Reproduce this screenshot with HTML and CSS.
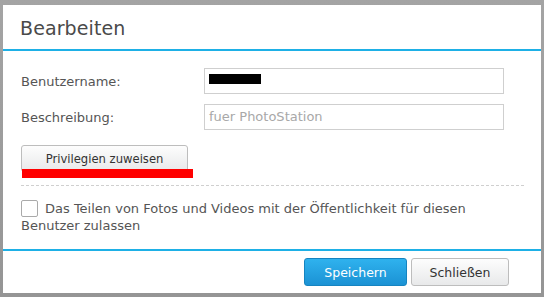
FILE: index.html
```html
<!DOCTYPE html>
<html lang="de">
<head>
<meta charset="utf-8">
<link rel="stylesheet" href="styles.css">
</head>
<body>
<div class="dialog">
  <div class="header">Bearbeiten</div>
  <div class="content">
    <div class="row">
      <label class="label">Benutzername:</label>
      <div class="input"><span class="redact"></span></div>
    </div>
    <div class="row">
      <label class="label">Beschreibung:</label>
      <div class="input placeholder">fuer PhotoStation</div>
    </div>
    <div class="priv">
      <button class="btn">Privilegien zuweisen</button>
      <span class="mark"></span>
    </div>
    <div class="sep"></div>
    <div class="check">
      <span class="box"></span>Das Teilen von Fotos und Videos mit der Öffentlichkeit für diesen Benutzer zulassen
    </div>
  </div>
  <div class="footer">
    <button class="btn primary">Speichern</button>
    <button class="btn close">Schließen</button>
  </div>
</div>
</body>
</html>
```
FILE: styles.css
```css
html, body {
  margin: 0;
  padding: 0;
}
body {
  width: 544px;
  height: 297px;
  background: linear-gradient(#a4a4a4, #959595);
  padding: 5px 3px 4px 3px;
  box-sizing: border-box;
  font-family: "DejaVu Sans", Verdana, sans-serif;
  overflow: hidden;
}
.dialog {
  background: #fff;
  height: 288px;
  display: flex;
  flex-direction: column;
}
.header {
  box-sizing: border-box;
  border-bottom: 2px solid #1eb0e6;
  height: 46px;
  padding: 12px 0 0 17px;
  font-size: 19px;
  color: #4a4a4a;
  letter-spacing: 0.1px;
}
.content {
  height: 198px;
  padding: 17px 0 0 18px;
  box-sizing: border-box;
  position: relative;
}
.row {
  display: flex;
  align-items: center;
  height: 26px;
  margin-bottom: 10px;
}
.label {
  width: 183px;
  font-size: 13px;
  color: #555;
}
.input {
  width: 300px;
  height: 26px;
  box-sizing: border-box;
  border: 1px solid #cfcfcf;
  font-size: 13px;
  line-height: 24px;
  padding-left: 4px;
}
.placeholder {
  color: #a8a8a8;
}
.redact {
  display: inline-block;
  width: 52px;
  height: 10px;
  background: #000;
  margin-top: 5px;
  vertical-align: top;
}
.priv {
  position: relative;
  margin-top: 15px;
  height: 26px;
}
.btn {
  font-family: "DejaVu Sans", Verdana, sans-serif;
  font-size: 12.5px;
  color: #333;
  height: 27px;
  box-sizing: border-box;
  border: 1px solid #bdbdbd;
  border-radius: 3px;
  background: linear-gradient(#fdfdfd, #e8e9ea);
  padding: 0;
  cursor: pointer;
}
.priv .btn {
  width: 167px;
  font-size: 11.6px;
}
.mark {
  position: absolute;
  left: 1px;
  top: 24px;
  width: 171px;
  height: 9px;
  background: #ff0000;
}
.sep {
  margin-top: 14px;
  width: 503px;
  border-top: 1px dashed #cfcfcf;
}
.check {
  margin-top: 14px;
  width: 480px;
  font-size: 13px;
  line-height: 17px;
  color: #555;
}
.box {
  display: inline-block;
  width: 17px;
  height: 17px;
  border: 1px solid #aaa;
  border-radius: 2px;
  box-sizing: border-box;
  background: #fff;
  vertical-align: -4px;
  margin-right: 7px;
}
.footer {
  border-top: 2px solid #1eb0e6;
  flex: 1;
  display: flex;
  justify-content: flex-end;
  align-items: flex-start;
  gap: 4px;
  padding: 6px 32px 0 0;
}
.footer .btn {
  height: 28px;
  margin-top: 1px;
}
.primary {
  width: 103px;
  color: #fff;
  border-color: #1684c0;
  background: linear-gradient(#2fb2ee, #1b92d4);
}
.close {
  width: 98px;
}
```
